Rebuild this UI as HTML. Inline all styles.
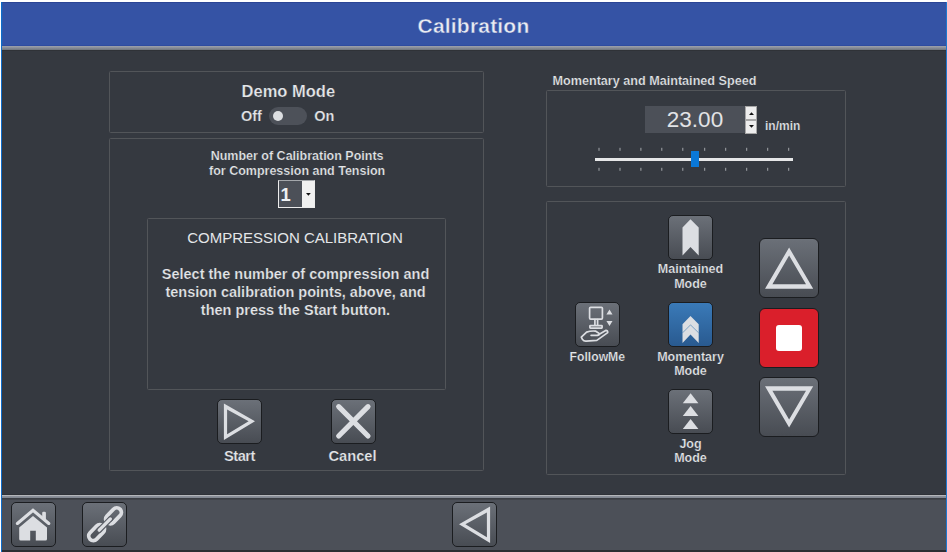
<!DOCTYPE html>
<html><head><meta charset="utf-8"><title>Calibration</title>
<style>
html,body{margin:0;padding:0;}
body{width:947px;height:552px;position:relative;overflow:hidden;background:#fff;font-family:"Liberation Sans",Arial,sans-serif;font-weight:bold;color:#e4e6e9;-webkit-text-stroke:.22px #353940;}
.abs{position:absolute;}
#frame{left:1px;top:2px;width:946px;height:550px;background:#353940;}
#lb{left:1px;top:2px;width:1px;height:550px;background:#0f6cc9;}
#lb2{left:2px;top:2px;width:1px;height:44px;background:rgba(15,108,201,.3);}
#rb{left:946px;top:2px;width:1px;height:550px;background:#1d78cf;}
#hdr{left:2px;top:2px;width:944px;height:44px;background:#3553a5;border-top:1px solid #2b4596;box-sizing:border-box;border-bottom:1px solid #2f4ca0;}
#hband{left:2px;top:46px;width:944px;height:4px;background:linear-gradient(#9ea2ae,#6f747d);}
#hline{left:2px;top:50px;width:944px;height:1px;background:#2f3237;}
#title{left:1.5px;top:4.2px;width:944px;height:44px;line-height:44px;-webkit-text-stroke:.4px #3553a5;text-align:center;font-size:21px;letter-spacing:.2px;color:#e9ebf2;}
.panel{border:1px solid #525559;box-sizing:border-box;border-radius:1.5px;}
.t{white-space:nowrap;text-align:center;}
.btn{box-sizing:border-box;border:1px solid #1b1d20;border-radius:5px;background:linear-gradient(#6b7078,#484c53);}
#ftl0{left:2px;top:494px;width:944px;height:1px;background:#2f3238;}
#ftl{left:2px;top:495px;width:944px;height:3px;background:linear-gradient(#b4b6ba 0,#b4b6ba 33%,#8d929c 34%,#80858e 100%);}
#ftl2{left:2px;top:498px;width:944px;height:2px;background:linear-gradient(#383b41,#44474d);}
#ft{left:2px;top:500px;width:944px;height:50px;background:#4c5058;}
#ftb{left:2px;top:550px;width:944px;height:2px;background:#2b2e33;}
</style></head><body>
<div id="frame" class="abs"></div>
<div id="hdr" class="abs"></div><div id="hband" class="abs"></div><div id="hline" class="abs"></div>
<div id="title" class="abs">Calibration</div>

<!-- panel 1 -->
<div class="abs panel" style="left:109px;top:71px;width:375px;height:62px;"></div>
<div class="abs t" style="left:241.6px;top:81px;font-size:16.5px;line-height:20px;">Demo Mode</div>
<div class="abs t" style="left:241px;top:107.4px;font-size:14.5px;line-height:18px;">Off</div>
<div class="abs" style="left:269px;top:107px;width:38px;height:18px;border-radius:9px;background:#4d5159;"></div>
<div class="abs" style="left:273.4px;top:110.9px;width:10px;height:10px;border-radius:50%;background:#dcdee1;"></div>
<div class="abs t" style="left:314.2px;top:107.4px;font-size:14.5px;line-height:18px;">On</div>

<!-- panel 2 -->
<div class="abs panel" style="left:109px;top:138px;width:375px;height:333px;"></div>
<div class="abs t" style="left:109.6px;width:375px;top:149px;font-size:12.5px;line-height:15px;">Number of Calibration Points<br>for Compression and Tension</div>
<div class="abs" style="left:277.5px;top:180px;width:37.5px;height:28px;box-sizing:border-box;border:1px solid #ececec;border-top-color:#a4a7ab;background:#4c5058;"></div>
<div class="abs" style="left:301.6px;top:181px;width:12.6px;height:26px;background:#f0f0f0;"></div>
<svg class="abs" style="left:306.4px;top:193px;" width="5" height="3"><path d="M0 0h4.8L2.4 2.7z" fill="#111"/></svg>
<div class="abs" style="left:280.6px;top:184.2px;font-size:18.4px;line-height:22px;color:#eef0f2;-webkit-text-stroke:0;">1</div>

<div class="abs panel" style="left:147px;top:218px;width:299px;height:172px;"></div>
<div class="abs t" style="left:145.5px;width:299px;top:228.5px;font-size:15px;font-weight:normal;line-height:18px;-webkit-text-stroke:0;">COMPRESSION CALIBRATION</div>
<div class="abs t" style="left:146px;width:299px;top:264.5px;font-size:14.5px;line-height:18px;">Select the number of compression and<br>tension calibration points, above, and<br>then press the Start button.</div>

<div class="abs btn" style="left:217px;top:399px;width:45px;height:45px;"></div>
<svg class="abs" style="left:217px;top:399px;" width="45" height="45"><path fill-rule="evenodd" fill="#dcdee2" d="M6.9 4.5L38 22.35L6.9 41zM10.1 10.4V35.3L31.6 22.35z"/></svg>
<div class="abs t" style="left:209px;width:61px;top:447.6px;font-size:14.7px;letter-spacing:-.5px;line-height:16px;">Start</div>
<div class="abs btn" style="left:331px;top:399px;width:45px;height:45px;"></div>
<svg class="abs" style="left:331px;top:399px;" width="45" height="45"><path d="M7.7 7.7L37 37M37 7.7L7.7 37" fill="none" stroke="#dcdee2" stroke-width="5.2" stroke-linecap="round"/></svg>
<div class="abs t" style="left:322px;width:61px;top:447.6px;font-size:14.7px;line-height:16px;">Cancel</div>

<!-- panel 3 -->
<div class="abs" style="left:552.5px;top:73.5px;font-size:12.62px;line-height:15px;white-space:nowrap;">Momentary and Maintained Speed</div>
<div class="abs panel" style="left:546px;top:90px;width:300px;height:97px;"></div>
<div class="abs" style="left:645px;top:106px;width:100px;height:27px;background:#4c5058;"></div>
<div class="abs t" style="left:645px;width:100px;top:106px;font-size:22.5px;font-weight:normal;line-height:27px;color:#e2e3e6;-webkit-text-stroke:0;">23.00</div>
<div class="abs" style="left:745px;top:106px;width:12px;height:14px;background:#ededed;box-sizing:border-box;border:1px solid #a6a6a6;"></div>
<div class="abs" style="left:745px;top:119.5px;width:12px;height:14px;background:#ededed;box-sizing:border-box;border:1px solid #a6a6a6;"></div>
<svg class="abs" style="left:748.5px;top:112.3px;" width="5" height="3"><path d="M0 3h5L2.5 0.2z" fill="#111"/></svg>
<svg class="abs" style="left:748.5px;top:124.7px;" width="5" height="3"><path d="M0 0h5L2.5 2.8z" fill="#111"/></svg>
<div class="abs" style="left:765px;top:119px;font-size:12px;line-height:15px;white-space:nowrap;">in/min</div>
<div class="abs" style="left:595px;top:158px;width:198px;height:3px;background:#e6e7e8;"></div>
<svg class="abs" style="left:590px;top:145px;" width="210" height="30"><rect x="8.5" y="2.8" width="1" height="3" fill="#a4a7ab"/><rect x="8.5" y="22.8" width="1" height="3" fill="#a4a7ab"/><rect x="29.5" y="2.8" width="1" height="3" fill="#a4a7ab"/><rect x="29.5" y="22.8" width="1" height="3" fill="#a4a7ab"/><rect x="50.4" y="2.8" width="1" height="3" fill="#a4a7ab"/><rect x="50.4" y="22.8" width="1" height="3" fill="#a4a7ab"/><rect x="71.3" y="2.8" width="1" height="3" fill="#a4a7ab"/><rect x="71.3" y="22.8" width="1" height="3" fill="#a4a7ab"/><rect x="92.3" y="2.8" width="1" height="3" fill="#a4a7ab"/><rect x="92.3" y="22.8" width="1" height="3" fill="#a4a7ab"/><rect x="114.2" y="2.8" width="1" height="3" fill="#a4a7ab"/><rect x="114.2" y="22.8" width="1" height="3" fill="#a4a7ab"/><rect x="135.2" y="2.8" width="1" height="3" fill="#a4a7ab"/><rect x="135.2" y="22.8" width="1" height="3" fill="#a4a7ab"/><rect x="156.2" y="2.8" width="1" height="3" fill="#a4a7ab"/><rect x="156.2" y="22.8" width="1" height="3" fill="#a4a7ab"/><rect x="177.2" y="2.8" width="1" height="3" fill="#a4a7ab"/><rect x="177.2" y="22.8" width="1" height="3" fill="#a4a7ab"/><rect x="198.2" y="2.8" width="1" height="3" fill="#a4a7ab"/><rect x="198.2" y="22.8" width="1" height="3" fill="#a4a7ab"/></svg>
<div class="abs" style="left:691px;top:151px;width:8px;height:16px;background:#0a78d8;"></div>

<!-- panel 4 -->
<div class="abs panel" style="left:546px;top:201px;width:300px;height:274px;"></div>
<div class="abs btn" style="left:668px;top:215px;width:45px;height:45px;"></div>
<svg class="abs" style="left:668px;top:215px;" width="45" height="45"><path fill="#dcdee2" d="M22.5 4.3L30.7 12.6V40.6L22.5 32.1L14.5 40.6V12.6z"/></svg>
<div class="abs t" style="left:640px;width:101px;top:261.7px;font-size:12.5px;line-height:15px;">Maintained<br>Mode</div>
<div class="abs btn" style="left:574.5px;top:302px;width:45px;height:45px;"></div>
<svg class="abs" style="left:573.9px;top:302px;" width="45" height="45" fill="none" stroke="#dcdee2" stroke-width="1.7" stroke-linejoin="round" stroke-linecap="round"><rect x="15.6" y="5.3" width="12.8" height="11.8" rx="1"/><path d="M20.9 17.5V23M23.6 17.5V23"/><rect x="15.9" y="23.6" width="12.2" height="2.5" rx=".5"/><path d="M7.3 35.1L12.6 30.1Q16.5 28.7 21.4 29.1L24.9 31.2Q26.3 32.9 23.6 33.3L31.7 28.4Q33.9 28.2 33.7 30.6L22.8 38.4L12.1 39.2Q9.9 39.4 8.3 37.2ZM23.6 33.3H17.1"/><path fill="#dcdee2" stroke="none" d="M35.5 7.5L38.5 12.6H32.4zM35.5 24.1L38.5 18.9H32.4z"/></svg>
<div class="abs t" style="left:546.8px;width:101px;top:350px;font-size:12.2px;line-height:14.5px;">FollowMe</div>
<div class="abs btn" style="left:668px;top:302px;width:45px;height:45px;background:linear-gradient(#3a7ab8,#295a90);"></div>
<svg class="abs" style="left:668px;top:302px;" width="45" height="45"><path fill="#dcdee2" d="M22.5 14L30.7 22.35V40.9L22.5 32.6L14.5 40.9V22.35z"/><path d="M14.5 30.9L22.5 22.9L30.7 30.9" fill="none" stroke="#3d78b0" stroke-width=".6"/></svg>
<div class="abs t" style="left:640px;width:101px;top:350px;font-size:12.5px;line-height:14px;">Momentary<br>Mode</div>
<div class="abs btn" style="left:668px;top:389px;width:45px;height:45px;"></div>
<svg class="abs" style="left:668px;top:389px;" width="45" height="45"><path fill="#dcdee2" d="M22.6 4.2L30.4 14.2H14.8z"/><path fill="#dcdee2" d="M22.6 17.1L30.4 27.1H14.8z"/><path fill="#dcdee2" d="M22.6 30.0L30.4 40.0H14.8z"/></svg>
<div class="abs t" style="left:640px;width:101px;top:436.5px;font-size:12.5px;line-height:14.5px;">Jog<br>Mode</div>

<div class="abs btn" style="left:759.3px;top:238px;width:60px;height:60px;border-radius:6px;"></div>
<svg class="abs" style="left:759.3px;top:238px;" width="60" height="60"><path fill-rule="evenodd" fill="#dcdee2" d="M30.1 9.5L54.2 50.7H6zM30.1 17.5L47 46.3H13.4z"/></svg>
<div class="abs btn" style="left:759.3px;top:308px;width:60px;height:60px;border-radius:6px;background:#da1f2b;"></div>
<div class="abs" style="left:776.4px;top:324.5px;width:26px;height:26.2px;border-radius:3px;background:#fff;"></div>
<div class="abs btn" style="left:759.3px;top:377.4px;width:60px;height:60px;border-radius:6px;"></div>
<svg class="abs" style="left:759.3px;top:377.4px;" width="60" height="60"><path fill-rule="evenodd" fill="#dcdee2" d="M30.1 50.5L54.2 9.3H6zM30.1 42.5L47 13.7H13.4z"/></svg>

<!-- footer -->
<div id="ftl0" class="abs"></div><div id="ftl" class="abs"></div><div id="ftl2" class="abs"></div><div id="ft" class="abs"></div><div id="ftb" class="abs"></div>
<div class="abs btn" style="left:11px;top:502px;width:45px;height:45px;"></div>
<svg class="abs" style="left:11px;top:502px;" width="45" height="45"><path fill="#dcdee2" fill-rule="evenodd" d="M22 14L36 25.6V37A1.5 1.5 0 0 1 34.5 38.5H9.7A1.5 1.5 0 0 1 8.2 37V25.6zM19.2 38.5V28.8H24.8V38.5z"/><path d="M6.4 21.4L22 8.3L37.8 21.4" fill="none" stroke="#dcdee2" stroke-width="3.2" stroke-linecap="round"/><rect x="31.2" y="9.7" width="3.7" height="8" rx="1.2" fill="#dcdee2"/></svg>
<div class="abs btn" style="left:82px;top:502px;width:45px;height:45px;"></div>
<svg class="abs" style="left:82px;top:502px;" width="45" height="45" fill="none"><g stroke="#dcdee2" stroke-width="3.8"><rect x="-9.3" y="-4.6" width="18.6" height="9.2" rx="4.6" transform="translate(31.5 13.8) rotate(-46)"/><rect x="-9.3" y="-4.6" width="18.6" height="9.2" rx="4.6" transform="translate(14.6 30.6) rotate(-46)"/></g><path d="M17.2 28.2L28.4 16.9" stroke="#595d65" stroke-width="5.6" stroke-linecap="round"/><path d="M17.2 28.2L28.4 16.9" stroke="#dcdee2" stroke-width="3.3" stroke-linecap="round"/></svg>
<div class="abs btn" style="left:452px;top:502px;width:45px;height:45px;"></div>
<svg class="abs" style="left:452px;top:502px;" width="45" height="45"><path fill-rule="evenodd" fill="#dcdee2" d="M38.1 4.5L7 22.35L38.1 41zM34.9 10.4V35.3L13.4 22.35z"/></svg>
<div id="lb" class="abs"></div><div id="lb2" class="abs"></div><div id="rb" class="abs"></div>
</body></html>
